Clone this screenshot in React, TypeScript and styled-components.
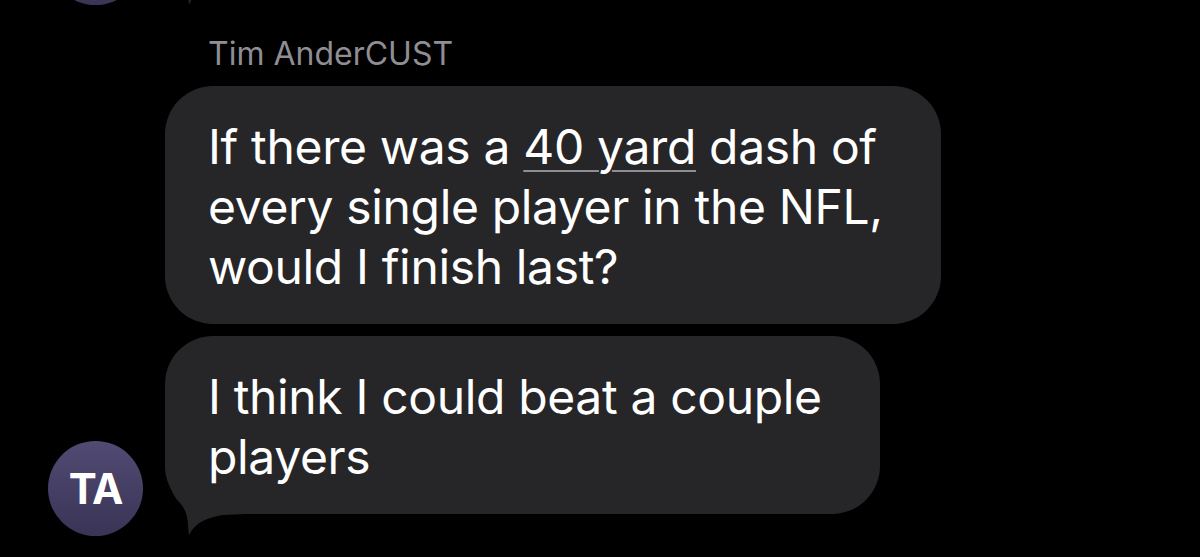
import React from 'react';
import styled, { createGlobalStyle } from 'styled-components';

const GlobalStyle = createGlobalStyle`
  html, body {
    margin: 0;
    padding: 0;
    background: #000;
    overflow: hidden;
  }
  body {
    font-family: Inter, "Noto Sans", "Liberation Sans", sans-serif;
    -webkit-font-smoothing: antialiased;
  }
`;

const BUBBLE = '#262628';

const Thread = styled.div`
  display: flex;
  flex-direction: column;
  padding-left: 48px;
  height: 557px;
  overflow: hidden;
`;

const Group = styled.div<{ offset: number }>`
  display: flex;
  flex-direction: row;
  align-items: flex-end;
  gap: 22px;
  margin-top: ${({ offset }) => offset}px;
`;

const Avatar = styled.div`
  flex: none;
  width: 95px;
  height: 95px;
  border-radius: 50%;
  background: linear-gradient(180deg, #514a73 0%, #3a3456 100%);
  display: flex;
  align-items: center;
  justify-content: center;
  color: #fff;
  font-family: Inter, "Liberation Sans", sans-serif;
  font-weight: 700;
  font-size: 42px;
  letter-spacing: -1px;
`;

const Column = styled.div`
  display: flex;
  flex-direction: column;
  align-items: flex-start;
  gap: 12px;
  padding-bottom: 22px;
`;

const Name = styled.div`
  padding-left: 43px;
  margin-bottom: 1px;
  color: #8e8e93;
  font-size: 32px;
  line-height: 38px;
`;

const Bubble = styled.div<{ width: number; height?: number }>`
  position: relative;
  box-sizing: border-box;
  width: ${({ width }) => width}px;
  ${({ height }) => (height ? `height: ${height}px;` : '')}
  padding: 31px 43px 27px;
  background: ${BUBBLE};
  border-radius: 48px;
  color: #fff;
  font-size: 48px;
  line-height: 60px;
  letter-spacing: -0.35px;
`;

const Line = styled.div`
  position: relative;
  z-index: 1;
  white-space: nowrap;
`;

const Detected = styled.span`
  text-decoration: underline;
  text-decoration-color: #8e8e93;
  text-decoration-thickness: 2px;
  text-underline-offset: 6px;
`;

const TailSvg = styled.svg`
  position: absolute;
  z-index: 0;
  left: 0;
  bottom: -22px;
  width: 80px;
  height: 62px;
`;

function Tail() {
  return (
    <TailSvg viewBox="0 0 80 62">
      <path
        d="M3 0 C4 12 8 22 14 28 C20 34 23 42 23 52 L24 62 C27 54 34 45 58 41 L80 40 L80 0 Z"
        fill={BUBBLE}
      />
    </TailSvg>
  );
}

export default function App() {
  return (
    <>
      <GlobalStyle />
      <Thread>
        <Group offset={-137}>
          <Avatar />
          <Column>
            <Bubble width={640} height={120}>
              <Tail />
            </Bubble>
          </Column>
        </Group>
        <Group offset={30}>
          <Avatar>TA</Avatar>
          <Column>
            <Name>Tim AnderCUST</Name>
            <Bubble width={776}>
              <Line>
                If there was a <Detected>40 yard</Detected> dash of
              </Line>
              <Line>every single player in the NFL,</Line>
              <Line>would I finish last?</Line>
            </Bubble>
            <Bubble width={715}>
              <Tail />
              <Line>I think I could beat a couple</Line>
              <Line>players</Line>
            </Bubble>
          </Column>
        </Group>
      </Thread>
    </>
  );
}
